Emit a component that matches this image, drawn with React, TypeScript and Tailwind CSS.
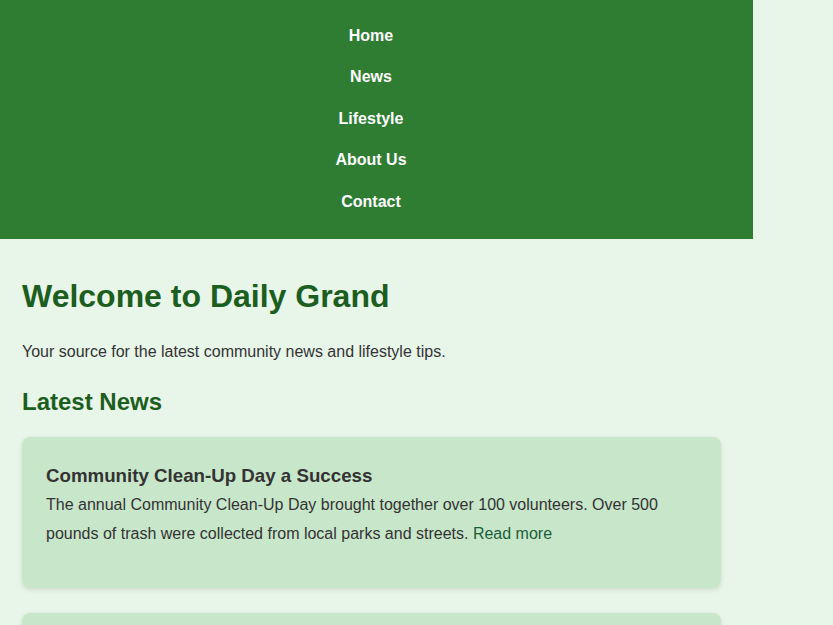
const navItems = ['Home', 'News', 'Lifestyle', 'About Us', 'Contact']

const articles = [
  {
    title: 'Community Clean-Up Day a Success',
    body: 'The annual Community Clean-Up Day brought together over 100 volunteers. Over 500 pounds of trash were collected from local parks and streets.',
  },
  {
    title: 'New Farmers Market Opens Downtown',
    body: 'Fresh produce, local crafts and live music are coming to Main Street every Saturday morning this summer.',
  },
]

export default function App() {
  return (
    <div className="h-[625px] overflow-hidden bg-[#e8f5e9] font-['Liberation_Sans',Arial,sans-serif] text-[#333]">
      <div className="w-[753px]">
        {/* Header nav */}
        <header className="bg-[#2e7d32] pt-[15px] pb-[16px] pr-[11px]">
          <ul className="flex flex-col">
            {navItems.map((item) => (
              <li
                key={item}
                className="flex h-[41.5px] items-center justify-center text-base font-bold text-white"
              >
                <a href="#">{item}</a>
              </li>
            ))}
          </ul>
        </header>

        <main className="pt-[39px] pr-[32px] pl-[22px]">
          <h1 className="mb-[25px] text-[32px] leading-[37px] font-bold text-[#1b5e20]">
            Welcome to Daily Grand
          </h1>
          <p className="mb-[24px] text-base leading-6">
            Your source for the latest community news and lifestyle tips.
          </p>
          <h2 className="mb-[21px] text-2xl leading-[28px] font-bold text-[#1b5e20]">
            Latest News
          </h2>

          <div className="flex flex-col gap-[25px] pb-6">
            {articles.map((a) => (
              <article
                key={a.title}
                className="rounded-lg bg-[#c8e6c9] p-6 shadow-[0_2px_5px_rgba(0,0,0,0.1)]"
              >
                <h3 className="text-[18.72px] leading-[29px] font-bold text-[#333]">
                  {a.title}
                </h3>
                <p className="mb-4 text-base leading-[29px]">
                  {a.body}{' '}
                  <a href="#" className="text-[#1b5e3c]">
                    Read more
                  </a>
                </p>
              </article>
            ))}
          </div>
        </main>
      </div>
    </div>
  )
}
